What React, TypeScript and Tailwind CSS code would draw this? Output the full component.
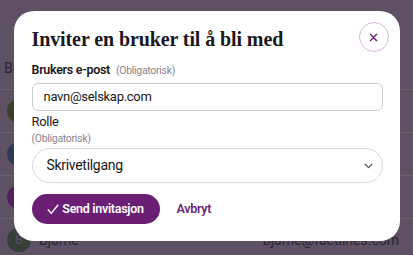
import React from 'react';

type Member = { name: string; email: string; initial: string; color: string };

const members: Member[] = [
  { name: 'Anne', email: 'anne@factlines.com', initial: 'A', color: 'bg-[#3d3f2b]' },
  { name: 'Per', email: 'per@factlines.com', initial: 'P', color: 'bg-[#2f3a56]' },
  { name: 'Kari', email: 'kari@factlines.com', initial: 'K', color: 'bg-[#55215b]' },
  { name: 'Bjarne', email: 'bjarne@factlines.com', initial: 'B', color: 'bg-[#363f3a]' },
];

const sans = "font-['Roboto','Liberation_Sans',sans-serif]";
const serif = "font-['Liberation_Serif','DejaVu_Serif',serif]";

export default function App() {
  return (
    <div className={`relative w-[413px] h-[255px] overflow-hidden bg-[#5e5163] ${sans}`}>
      {/* page behind the overlay */}
      <div className="flex flex-col pt-[58px]">
        <div className="px-[4px] h-[31px] text-[14px] leading-[20px] text-[#2c2431]">Brukere</div>
        {members.map((m) => (
          <div key={m.name} className="flex items-center gap-[8px] h-[43px] px-[7px] pr-[14px] border-t border-[#6c6070]">
            <div className={`w-[24px] h-[24px] rounded-full ${m.color} flex items-center justify-center text-[12px] text-[#5e5163]`}>
              {m.initial}
            </div>
            <span className="flex-1 text-[14px] text-[#2c2431]">{m.name}</span>
            <span className="text-[14px] text-[#2c2431]">{m.email}</span>
          </div>
        ))}
      </div>

      {/* modal */}
      <div className="absolute inset-0 flex items-start justify-center pt-[11px]">
        <div className="w-[386px] h-[230px] bg-white rounded-[20px] pl-[18px] pr-[17px] pt-[11px] pb-[17px] flex flex-col tracking-[-0.3px]">
          <div className="flex items-center justify-between h-[30px] -mr-[6px]">
            <h2 className={`${serif} font-bold text-[20px] leading-[26px] text-[#1c1820] tracking-[-0.1px] pt-[3px]`}>
              Inviter en bruker til å bli med
            </h2>
            <button className="w-[30px] h-[30px] rounded-full border border-[#d9b8e0] flex items-center justify-center">
              <svg width="9" height="9" viewBox="0 0 10 10" fill="none" stroke="#6b1f74" strokeWidth="1.5" strokeLinecap="round">
                <path d="M1.5 1.5l7 7M8.5 1.5l-7 7" />
              </svg>
            </button>
          </div>

          <div className="flex items-baseline gap-[6px] mt-[9px] h-[19px]">
            <span className="text-[12.5px] font-semibold text-[#1c1820]">Brukers e-post</span>
            <span className="text-[10.5px] text-[#8a8590]">(Obligatorisk)</span>
          </div>
          <div className="mt-[3px] h-[29px] rounded-[6px] border border-[#cfcbd1] flex items-center px-[11px] text-[13px] text-[#1c1820]">
            navn@selskap.com
          </div>

          <div className="mt-[2px] text-[13px] leading-[18px] text-[#1c1820]">Rolle</div>
          <div className="text-[10.5px] leading-[15px] text-[#8a8590]">(Obligatorisk)</div>
          <div className="mt-[2px] h-[35px] rounded-full border border-[#dcd8de] flex items-center justify-between pl-[14px] pr-[9px] text-[14px] text-[#1c1820]">
            <span>Skrivetilgang</span>
            <svg width="9" height="6" viewBox="0 0 9 6" fill="none" stroke="#4a4450" strokeWidth="1.1" strokeLinecap="round" strokeLinejoin="round">
              <path d="M1 1.2l3.5 3.5L8 1.2" />
            </svg>
          </div>

          <div className="mt-[11px] flex items-center gap-[17px]">
            <button className="h-[30px] w-[128px] rounded-full bg-[#6b1f74] text-white text-[12.5px] font-semibold flex items-center justify-center gap-[3px]">
              <svg width="12" height="11" viewBox="0 0 12 11" fill="none" stroke="white" strokeWidth="1.4" strokeLinecap="round" strokeLinejoin="round">
                <path d="M1.2 5.8l3 3.6L10.8 1.2" />
              </svg>
              Send invitasjon
            </button>
            <button className="text-[12.5px] font-semibold text-[#6b1f74]">Avbryt</button>
          </div>
        </div>
      </div>
    </div>
  );
}
